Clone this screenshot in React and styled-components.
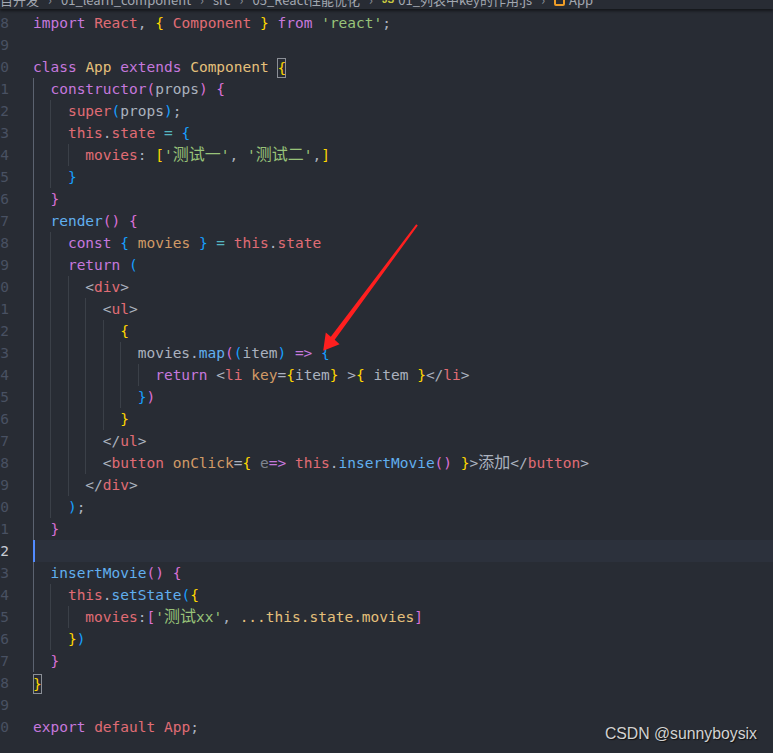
import React from "react";
import styled, { createGlobalStyle } from "styled-components";

const GlobalStyle = createGlobalStyle`
  html, body { margin: 0; padding: 0; background: #282c34; }
  body { width: 773px; height: 753px; overflow: hidden; }
`;

const C = {
  kw: "#c678dd",
  red: "#e06c75",
  str: "#98c379",
  cls: "#e5c07b",
  or: "#d19a66",
  fn: "#61afef",
  cy: "#56b6c2",
  p: "#abb2bf",
  gold: "#ffd700",
  orc: "#da70d6",
  lb: "#179fff",
  dim: "#7f848e",
};

const Screen = styled.div`
  position: relative;
  width: 773px;
  height: 753px;
  overflow: hidden;
  background: #282c34;
  display: flex;
  flex-direction: column;
`;

const Breadcrumbs = styled.div`
  position: relative;
  z-index: 1;
  flex-shrink: 0;
  height: 9px;
  overflow: hidden;
  display: flex;
  align-items: flex-end;
  gap: 9px;
  box-shadow: 0 2px 3px rgba(0, 0, 0, 0.5);
  font-family: "Noto Sans CJK SC", "Noto Sans", sans-serif;
  font-size: 13px;
  line-height: 18px;
  color: #a3a8b1;
  white-space: nowrap;
`;

const Crumb = styled.span`
  display: flex;
  align-items: center;
  gap: 4px;
`;

const Sep = styled.span`
  color: #8a8f98;
`;

const JsMark = styled.span`
  font-family: "Liberation Sans", sans-serif;
  font-size: 10px;
  font-weight: bold;
  color: #cbcb41;
`;

const MethodMark = styled.span`
  display: inline-block;
  width: 11px;
  height: 11px;
  border: 2px solid #ee9d28;
  box-sizing: border-box;
  border-radius: 2px;
`;

const Editor = styled.div`
  padding-top: 3px;
  font-family: "DejaVu Sans Mono", monospace;
  font-size: 14.5px;
`;

const Row = styled.div`
  display: flex;
  height: 22px;
  line-height: 22px;
`;

const LineNo = styled.div`
  flex-shrink: 0;
  width: 9px;
  margin-right: 24px;
  overflow: hidden;
  display: flex;
  justify-content: flex-end;
  color: ${(p) => (p.$active ? "#c8ccd4" : "#495162")};
`;

const Code = styled.div`
  position: relative;
  flex: 1;
  display: flex;
  white-space: pre;
  background: ${(p) => (p.$active ? "#2c313c" : "transparent")};
`;

const Guide = styled.span`
  flex-shrink: 0;
  width: 2ch;
  height: 22px;
  box-sizing: border-box;
  border-left: 1px solid ${(p) => (p.$active ? "#5c6370" : "#3b4048")};
`;

const Text = styled.span``;

const Tok = styled.span`
  color: ${(p) => C[p.$c]};
`;

const Box = styled.span`
  display: inline-block;
  height: 20px;
  line-height: 20px;
  vertical-align: middle;
  box-shadow: inset 0 0 0 1px #8b8f96;
`;

const Cjk = styled.span`
  font-family: "Noto Sans CJK SC", sans-serif;
  font-size: 16px;
  line-height: 1;
`;

const Cursor = styled.span`
  position: absolute;
  left: 0;
  top: 0;
  width: 2px;
  height: 22px;
  background: #528bff;
`;

const Arrow = styled.svg`
  position: absolute;
  left: 0;
  top: 0;
  pointer-events: none;
`;

const Watermark = styled.div`
  position: absolute;
  right: 16px;
  bottom: 10px;
  font-family: "Liberation Sans", Arial, sans-serif;
  font-size: 15.8px;
  line-height: 18px;
  color: #d2d2d2;
  text-shadow: 1px 1px 1px #111;
`;

const lines = [
  [8, 0, [["kw", "import"], ["p", " "], ["red", "React"], ["p", ", "], ["gold", "{"], ["p", " "], ["red", "Component"], ["p", " "], ["gold", "}"], ["p", " "], ["kw", "from"], ["p", " "], ["str", "'react'"], ["p", ";"]]],
  [9, 0, []],
  [10, 0, [["kw", "class"], ["p", " "], ["cls", "App"], ["p", " "], ["kw", "extends"], ["p", " "], ["cls", "Component"], ["p", " "], ["gold", "{", true]]],
  [11, 1, [["kw", "constructor"], ["orc", "("], ["p", "props"], ["orc", ")"], ["p", " "], ["orc", "{"]]],
  [12, 2, [["red", "super"], ["lb", "("], ["p", "props"], ["lb", ")"], ["p", ";"]]],
  [13, 2, [["red", "this"], ["p", "."], ["red", "state"], ["p", " "], ["cy", "="], ["p", " "], ["lb", "{"]]],
  [14, 3, [["red", "movies"], ["p", ": "], ["gold", "["], ["str", "'测试一'"], ["p", ", "], ["str", "'测试二'"], ["p", ","], ["gold", "]"]]],
  [15, 2, [["lb", "}"]]],
  [16, 1, [["orc", "}"]]],
  [17, 1, [["fn", "render"], ["orc", "()"], ["p", " "], ["orc", "{"]]],
  [18, 2, [["kw", "const"], ["p", " "], ["lb", "{"], ["p", " "], ["or", "movies"], ["p", " "], ["lb", "}"], ["p", " "], ["cy", "="], ["p", " "], ["red", "this"], ["p", "."], ["red", "state"]]],
  [19, 2, [["kw", "return"], ["p", " "], ["lb", "("]]],
  [20, 3, [["p", "<"], ["red", "div"], ["p", ">"]]],
  [21, 4, [["p", "<"], ["red", "ul"], ["p", ">"]]],
  [22, 5, [["gold", "{"]]],
  [23, 6, [["p", "movies."], ["fn", "map"], ["orc", "("], ["lb", "("], ["p", "item"], ["lb", ")"], ["p", " "], ["kw", "=>"], ["p", " "], ["lb", "{"]]],
  [24, 7, [["kw", "return"], ["p", " <"], ["red", "li"], ["p", " "], ["or", "key"], ["p", "="], ["gold", "{"], ["p", "item"], ["gold", "}"], ["p", " >"], ["gold", "{"], ["p", " item "], ["gold", "}"], ["p", "</"], ["red", "li"], ["p", ">"]]],
  [25, 6, [["lb", "}"], ["orc", ")"]]],
  [26, 5, [["gold", "}"]]],
  [27, 4, [["p", "</"], ["red", "ul"], ["p", ">"]]],
  [28, 4, [["p", "<"], ["red", "button"], ["p", " "], ["or", "onClick"], ["p", "="], ["gold", "{"], ["p", " "], ["dim", "e"], ["kw", "=>"], ["p", " "], ["red", "this"], ["p", "."], ["fn", "insertMovie"], ["orc", "()"], ["p", " "], ["gold", "}"], ["p", ">添加</"], ["red", "button"], ["p", ">"]]],
  [29, 3, [["p", "</"], ["red", "div"], ["p", ">"]]],
  [30, 2, [["lb", ")"], ["p", ";"]]],
  [31, 1, [["orc", "}"]]],
  [32, 1, []],
  [33, 1, [["fn", "insertMovie"], ["orc", "()"], ["p", " "], ["orc", "{"]]],
  [34, 2, [["red", "this"], ["p", "."], ["fn", "setState"], ["lb", "("], ["gold", "{"]]],
  [35, 3, [["red", "movies"], ["p", ":"], ["orc", "["], ["str", "'测试xx'"], ["p", ", "], ["cls", "...this.state.movies"], ["orc", "]"]]],
  [36, 2, [["gold", "}"], ["lb", ")"]]],
  [37, 1, [["orc", "}"]]],
  [38, 0, [["gold", "}", true]]],
  [39, 0, []],
  [40, 0, [["kw", "export"], ["p", " "], ["red", "default"], ["p", " "], ["red", "App"], ["p", ";"]]],
];

const ACTIVE_LINE = 32;

function Token({ c, text, boxed }) {
  const parts = text.split(/([\u3400-\u9fff]+)/);
  const inner = parts.map((s, i) => (i % 2 ? <Cjk key={i}>{s}</Cjk> : s));
  return <Tok $c={c}>{boxed ? <Box>{inner}</Box> : inner}</Tok>;
}

function CodeLine({ n, indent, tokens }) {
  const active = n === ACTIVE_LINE;
  return (
    <Row>
      <LineNo $active={active}>{n}</LineNo>
      <Code $active={active}>
        {Array.from({ length: indent }).map((_, i) => (
          <Guide key={i} $active={i === 0} />
        ))}
        <Text>
          {tokens.map(([c, text, boxed], i) => (
            <Token key={i} c={c} text={text} boxed={boxed} />
          ))}
        </Text>
        {active && <Cursor />}
      </Code>
    </Row>
  );
}

export default function App() {
  return (
    <>
      <GlobalStyle />
      <Screen>
        <Breadcrumbs>
          <Crumb>目开发</Crumb>
          <Sep>›</Sep>
          <Crumb>01_learn_component</Crumb>
          <Sep>›</Sep>
          <Crumb>src</Crumb>
          <Sep>›</Sep>
          <Crumb>05_React性能优化</Crumb>
          <Sep>›</Sep>
          <Crumb>
            <JsMark>JS</JsMark>01_列表中key的作用.js
          </Crumb>
          <Sep>›</Sep>
          <Crumb>
            <MethodMark />App
          </Crumb>
        </Breadcrumbs>
        <Editor>
          {lines.map(([n, indent, tokens]) => (
            <CodeLine key={n} n={n} indent={indent} tokens={tokens} />
          ))}
        </Editor>
        <Arrow width="773" height="753" viewBox="0 0 773 753">
          <polygon
            points="416.2,224.3 417.8,225.5 334.7,339.8 339.6,344.2 323.2,350.8 325.8,332.4 330.8,336.8"
            fill="#ff1f1f"
          />
        </Arrow>
        <Watermark>CSDN @sunnyboysix</Watermark>
      </Screen>
    </>
  );
}
